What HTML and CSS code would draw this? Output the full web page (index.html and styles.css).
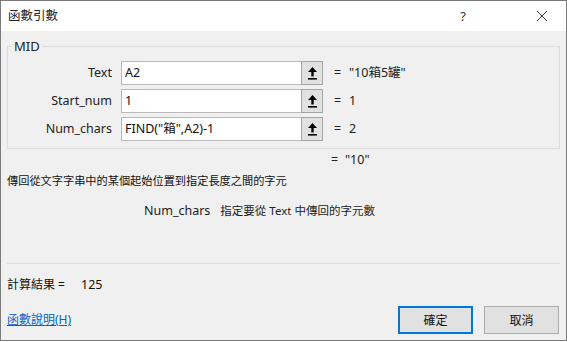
FILE: index.html
```html
<!DOCTYPE html>
<html lang="zh-Hant">
<head>
    <meta charset="UTF-8">
    <title>函數引數</title>
    <link rel="stylesheet" href="styles.css">
</head>
<body>
    <div class="dialog">
        <div class="title-bar">
            <span class="title">函數引數</span>
            <span class="title-btn help">?</span>
            <span class="title-btn close">
                <svg width="12" height="12" viewBox="0 0 12 12"><path d="M1 1L11 11M11 1L1 11" stroke="#333" stroke-width="1"/></svg>
            </span>
        </div>

        <div class="content">
            <fieldset class="group">
                <legend>MID</legend>
                <div class="arg-row">
                    <label class="arg-label">Text</label>
                    <div class="arg-input">A2</div>
                    <button class="ref-btn">
                        <svg width="11" height="14" viewBox="0 0 11 14"><path d="M5.5 1L1 6H10Z" fill="#000"/><rect x="4.3" y="5" width="2.4" height="5.5" fill="#000"/><rect x="1" y="12" width="9" height="1.6" fill="#000"/></svg>
                    </button>
                    <span class="arg-eq">=</span>
                    <span class="arg-value">"10箱5罐"</span>
                </div>
                <div class="arg-row">
                    <label class="arg-label">Start_num</label>
                    <div class="arg-input">1</div>
                    <button class="ref-btn">
                        <svg width="11" height="14" viewBox="0 0 11 14"><path d="M5.5 1L1 6H10Z" fill="#000"/><rect x="4.3" y="5" width="2.4" height="5.5" fill="#000"/><rect x="1" y="12" width="9" height="1.6" fill="#000"/></svg>
                    </button>
                    <span class="arg-eq">=</span>
                    <span class="arg-value">1</span>
                </div>
                <div class="arg-row">
                    <label class="arg-label">Num_chars</label>
                    <div class="arg-input">FIND("箱",A2)-1</div>
                    <button class="ref-btn">
                        <svg width="11" height="14" viewBox="0 0 11 14"><path d="M5.5 1L1 6H10Z" fill="#000"/><rect x="4.3" y="5" width="2.4" height="5.5" fill="#000"/><rect x="1" y="12" width="9" height="1.6" fill="#000"/></svg>
                    </button>
                    <span class="arg-eq">=</span>
                    <span class="arg-value">2</span>
                </div>
            </fieldset>

            <div class="result-line"><span class="arg-eq">=</span><span>"10"</span></div>
            <div class="desc">傳回從文字字串中的某個起始位置到指定長度之間的字元</div>
            <div class="arg-help"><span class="arg-help-name">Num_chars</span>指定要從 Text 中傳回的字元數</div>

            <div class="divider"></div>
            <div class="calc">計算結果 =<span class="calc-value">125</span></div>

            <div class="footer">
                <a class="help-link" href="#">函數說明(H)</a>
                <div class="buttons">
                    <button class="btn primary">確定</button>
                    <button class="btn">取消</button>
                </div>
            </div>
        </div>
    </div>
</body>
</html>
```

FILE: styles.css
```css
* {
    box-sizing: border-box;
}

body {
    margin: 0;
    font-family: "Noto Sans", "Noto Sans CJK TC", sans-serif;
    font-size: 12px;
    line-height: 16px;
    color: #1a1a1a;
    background: #fff;
}

.dialog {
    width: 567px;
    height: 341px;
    border: 1px solid #7a7a7a;
    background: #f0f0f0;
    display: flex;
    flex-direction: column;
}

.title-bar {
    height: 30px;
    background: #fff;
    display: flex;
    align-items: center;
    padding-left: 7px;
}

.title {
    flex: 1;
    font-size: 12.5px;
    color: #222;
}

.title-btn {
    width: 46px;
    height: 30px;
    display: flex;
    align-items: center;
    justify-content: center;
    color: #333;
}

.help {
    font-size: 13px;
    margin-right: 33px;
}

.close {
    margin-right: 1px;
}

.content {
    flex: 1;
    padding: 8px 6px 0 6px;
    display: flex;
    flex-direction: column;
}

.group {
    margin: 0;
    border: 1px solid #dcdcdc;
    padding: 8px 0 0 0;
    height: 110px;
    width: 553px;
}

.group legend {
    font-size: 13px;
    padding: 0 2px;
    margin-left: 4px;
    color: #222;
    line-height: 14px;
}

.arg-row {
    display: flex;
    align-items: center;
    height: 24px;
    margin-bottom: 4px;
}

.arg-label {
    width: 104px;
    text-align: right;
    font-size: 12.5px;
    color: #222;
}

.arg-input {
    margin-left: 9px;
    width: 180px;
    height: 24px;
    border: 1px solid #b9b9b9;
    border-right: none;
    background: #fff;
    padding: 3px 4px 0 3px;
    font-size: 12.5px;
    color: #111;
}

.ref-btn {
    width: 22px;
    height: 24px;
    border: 1px solid #a5a5a5;
    background: #e1e1e1;
    padding: 0;
    display: flex;
    align-items: center;
    justify-content: center;
}

.arg-eq {
    margin-left: 11px;
    width: 14px;
    font-size: 12.5px;
    color: #222;
}

.arg-value {
    margin-left: 1px;
    font-size: 12.5px;
    color: #222;
}

.result-line {
    margin-top: 3px;
    padding-left: 324px;
    display: flex;
    font-size: 12.5px;
    color: #222;
}

.result-line .arg-eq {
    margin-left: 0;
}

.desc {
    margin-top: 5px;
    font-size: 11.2px;
    color: #111;
}

.arg-help {
    margin-top: 14px;
    padding-left: 137px;
    font-size: 11.5px;
    color: #222;
}

.arg-help-name {
    font-size: 12.5px;
    margin-right: 10px;
}

.divider {
    margin-top: 44px;
    height: 1px;
    background: #dcdcdc;
    width: 553px;
}

.calc {
    margin-top: 13px;
    font-size: 12px;
    color: #111;
}

.calc-value {
    margin-left: 16px;
    font-size: 12.5px;
}

.footer {
    margin-top: 13px;
    display: flex;
    align-items: center;
    justify-content: space-between;
}

.help-link {
    color: #0066cc;
    font-size: 12px;
    text-decoration: underline;
}

.buttons {
    display: flex;
    gap: 11px;
    margin-right: 1px;
}

.btn {
    width: 75px;
    height: 28px;
    border: 1px solid #adadad;
    background: #e1e1e1;
    font-family: inherit;
    font-size: 12px;
    color: #111;
}

.btn.primary {
    border: 2px solid #0078d7;
}
```
